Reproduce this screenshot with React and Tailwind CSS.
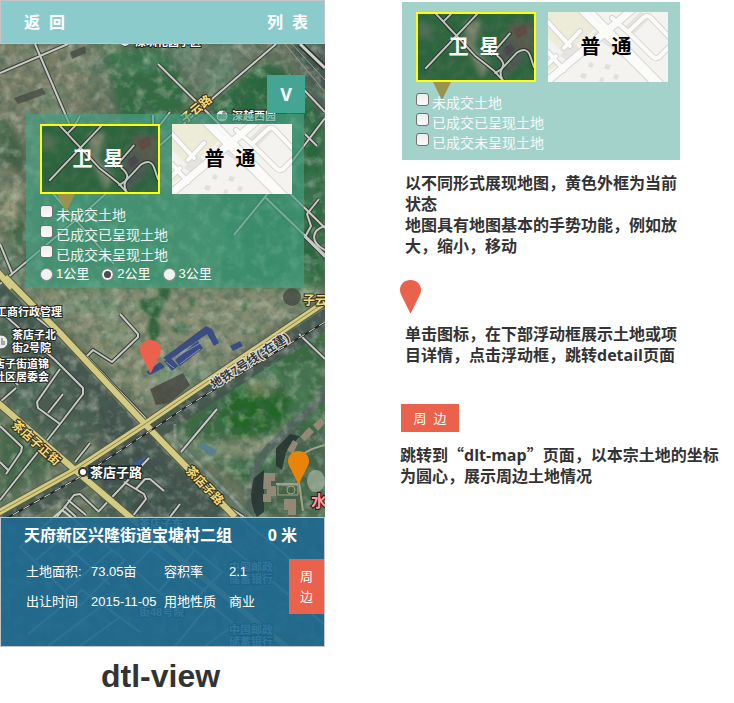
import React, { useId, useState } from "react";

const SANS = "font-['Liberation_Sans','Noto_Sans_CJK_SC',sans-serif]";
const HEAD = "font-['Open_Sans','Noto_Sans_CJK_SC',sans-serif]";

const mapRoads = [
  "M0 73 L68 44",
  "M35 44 L72 130 L116 182 L170 112",
  "M72 130 L80 116",
  "M153 115 V130",
  "M158 64 L325 228",
  "M276 44 L205 105 L90 208 L0 284",
  "M290 75 L325 112",
  "M325 118 L265 197 L234 235",
  "M265 197 L325 255",
  "M305 134 L317 146",
  "M319 199 L307 214 L311 226 L305 237 L325 257",
  "M325 226 C312 230 309 242 325 250",
  "M0 244 L12 273",
  "M50 190 L114 264",
  "M37 318 L88 358 L145 419",
  "M86 357 L93 350 L112 362 L138 337 L138 334 L120 314",
  "M0 311 L55 360 L83 388 L83 394 L60 424 L0 500",
  "M60 424 L38 408 L37 402 L60 369 M48 413 L63 394",
  "M0 402 L16 388 M10 376 L18 385",
  "M0 426 L22 447 L21 452 L6 474 M0 462 L9 471",
  "M57 517 L74 495 L80 494 L98 511 M64 506 L76 517 M68 500 L86 515",
  "M98 512 L149 458 M124 482 L144 494 L146 499 L132 517 M136 489 L145 479 L150 479 L164 491",
  "M217 409 L181 452",
  "M170 517 L180 504 M75 462 L90 443",
  "M120 392 L146 419",
  "M299 334 L325 359",
  "M230 508 L244 517",
];

const yellowRoads = [
  "M-4 270 L12 288",
  "M5 277 L60 333 L145 424 L235 517",
  "M328 300 L180 400 L145 424 L75 470 L-4 514",
  "M-4 401 L75 470 L130 517 L290 650",
];

const sheetRoads = [
  "M20 547 L62 510 L125 560 L80 606 Z",
  "M36 560 L78 524 M50 575 L96 537 M66 590 L112 550 M50 530 L110 585",
  "M28 634 L82 590 L140 632 M48 646 L104 604 M80 646 L120 617",
  "M170 530 L222 572 L182 612 L132 568 Z M150 549 L206 592 M195 550 L160 590",
  "M210 530 L325 625 M240 517 L325 588",
  "M175 646 L210 604 L260 646 M205 646 L235 624",
];

function MapBackdrop() {
  return (
    <svg
      aria-hidden="true"
      viewBox="0 0 325 647"
      preserveAspectRatio="xMidYMid slice"
      className="absolute inset-0 -z-10 h-full w-full"
    >
      <defs>
        <filter id="soft" x="-20%" y="-20%" width="140%" height="140%">
          <feGaussianBlur stdDeviation="4" />
        </filter>
        <filter id="slight" x="-20%" y="-20%" width="140%" height="140%">
          <feGaussianBlur stdDeviation="1.5" />
        </filter>
        <filter id="grain" x="0" y="0" width="100%" height="100%">
          <feTurbulence type="fractalNoise" baseFrequency="0.12" numOctaves="5" seed="7" />
          <feColorMatrix values="0 0 0 0 0.06  0 0 0 0 0.13  0 0 0 0 0.09  1.8 0 0 0 -0.7" />
        </filter>
        <filter id="grainLight" x="0" y="0" width="100%" height="100%">
          <feTurbulence type="fractalNoise" baseFrequency="0.09" numOctaves="5" seed="21" />
          <feColorMatrix values="0 0 0 0 0.7  0 0 0 0 0.73  0 0 0 0 0.62  0 1.8 0 0 -0.85" />
        </filter>
        <filter id="woods" x="0" y="0" width="100%" height="100%">
          <feTurbulence type="fractalNoise" baseFrequency="0.025" numOctaves="4" seed="4" />
          <feColorMatrix values="0 0 0 0 0.14  0 0 0 0 0.35  0 0 0 0 0.2  0 0 4 0 -2.1" />
        </filter>
      </defs>
      <rect width="325" height="647" fill="#6a755f" />
      <g filter="url(#soft)">
        <path d="M0 40 H100 L80 120 L110 200 L60 290 L0 240Z" fill="#7b7f68" />
        <path d="M0 110 L26 150 V180 L0 160Z M0 225 L30 200 V270Z" fill="#3f6143" />
        <path d="M0 190 L18 192 L22 218 L0 226Z" fill="#979978" />
        <path d="M104 50 L165 44 L190 90 L180 130 L120 120Z" fill="#336c43" />
        <path d="M160 44 H262 L205 96Z" fill="#6b7d6a" />
        <path d="M210 105 L262 62 L290 70 L325 120 V290 H200Z" fill="#28673b" />
        <path d="M30 190 H220 V290 H40Z" fill="#42744e" />
        <path d="M290 40 H325 V130Z" fill="#4a5852" />
        <path d="M25 288 H325 L190 385 L150 410 L60 320Z" fill="#868d72" />
        <path d="M0 290 L120 410 L70 460 L0 400Z" fill="#4a5c50" />
        <path d="M0 420 L60 460 L0 500Z" fill="#44694a" />
        <path d="M230 375 L325 325 V460 L265 500 L175 430Z" fill="#3a6a42" />
        <path d="M236 385 L300 398 L275 430 L240 440 L218 420Z" fill="#226628" />
        <path d="M190 445 L275 438 L290 420 L285 450 L220 458Z" fill="#8a9377" />
        <path d="M246 378 L275 378 L272 392 L252 394Z" fill="#7f8d66" />
        <path d="M100 400 L150 450 L240 517 H100Z" fill="#3f504b" />
        <path d="M285 430 H325 V517 H250Z" fill="#44634a" />
      </g>
      <g fill="#2d6336" filter="url(#slight)">
        <path d="M140 300 L158 298 L160 288 L172 288 L164 306 L158 316 L160 334 L152 344 L148 330 L150 316 L141 308Z" />
        <path d="M170 328 L182 322 L190 328 L180 334Z M188 298 L196 300 L192 308Z M254 326 L262 328 L256 334Z M240 306 L250 300 L244 312Z" />
      </g>
      <rect width="325" height="647" filter="url(#woods)" opacity="0.4" />
      <g fill="none" stroke="#44534e" strokeWidth="18" opacity="0.85">
        <path d="M-10 284 L45 338 L130 429 L220 522" />
        <path d="M330 316 L186 410 L151 434 L80 480 L0 526" />
        <path d="M298 44 L330 84" />
      </g>
      <g fill="none" stroke="#55655f" strokeWidth="8">
        <path d="M328 392 L275 442 C258 458 250 472 250 520" />
        <path d="M175 424 V440 L256 522" strokeWidth="3" stroke="#88958a" />
      </g>
      <rect width="325" height="647" filter="url(#grain)" opacity="0.8" />
      <rect width="325" height="647" filter="url(#grainLight)" opacity="0.55" />

      <g fill="#394c84">
        <path d="M163 358 L206 326 L212 329 L219 343 L214 346 L207 334 L168 361Z" />
        <path d="M175 360 L198 341 L203 348 L180 366Z M164 361 L171 358 L178 366 L172 371Z M146 372 L160 362 L165 367 L150 375Z" />
        <path d="M230 346 L240 341 L243 346 L233 351Z" />
      </g>
      <path d="M176 357 L202 342 M180 364 L200 349 M166 362 L174 368" stroke="#8995b4" strokeWidth="1" />
      <path d="M198 447 l5 -5 l14 9 l-5 5Z" fill="#55808c" />
      <path d="M134 463 l12 -7 l3 4 l-12 7z" fill="#3f5b95" />
      <path d="M150 389 L183 373 L190 385 L170 403 L156 405Z" fill="#45443e" opacity="0.8" />
      <path d="M70 52 L85 46 L86 53 L72 59Z M14 98 L42 88 L46 94 L18 104Z" fill="#3d443e" opacity="0.7" />
      <circle cx="292" cy="297" r="9" fill="#454a43" opacity="0.8" />
      <g fill="#26322f" opacity="0.85">
        <path d="M254 478 L264 470 V512 L257 517 Q247 500 254 478Z" />
        <path d="M276 448 L290 434 L300 436 L286 452 L282 470 L276 466Z" />
      </g>
      <g fill="#9a8c7a" opacity="0.9">
        <path d="M264 473 h11 v8 h-4 v5 h5 v10 h-5 v6 h-8 v-8 h4 v-5 h-4z" />
        <path d="M287 450 l6 -10 l5 3 l-5 11z M300 437 l9 -10 l5 5 l-9 9z M313 425 l8 -7 l4 5 l-7 8z" />
        <path d="M284 499 h12 v16 h-8 v-5 h-4z" />
      </g>
      <g fill="none" stroke="#a0a486" strokeWidth="2">
        <path d="M299 482 L303 511 M276 484 H298 M303 454 Q312 448 325 445" />
        <circle cx="291" cy="490" r="4" strokeWidth="1" />
        <path d="M278 485 H298 V495 H278Z" strokeWidth="1" />
      </g>
      <ellipse cx="316" cy="481" rx="9" ry="11" fill="#a0b09b" opacity="0.75" />

      <g fill="none" strokeLinejoin="round">
        {mapRoads.map((d) => (
          <path key={d} d={d} stroke="#363e38" strokeWidth="4" />
        ))}
        {mapRoads.map((d) => (
          <path key={d} d={d} stroke="#c9cac3" strokeWidth="2" />
        ))}
        <path d="M300 44 L325 68" stroke="#2b322e" strokeWidth="6" />
        <path d="M300 44 L325 68" stroke="#d3d3cd" strokeWidth="3" />
        <path d="M285 44 L325 92 M292 44 L325 80" stroke="#8f9d85" strokeWidth="1" />
        {yellowRoads.map((d) => (
          <path key={d} d={d} stroke="#5b5c3c" strokeWidth="8" />
        ))}
        {yellowRoads.map((d) => (
          <path key={d} d={d} stroke="#d3cb84" strokeWidth="6" />
        ))}
        <path d="M328 300 L180 400 L145 424 L75 470 L-4 514" stroke="#928844" strokeWidth="1" />
        <path d="M325 322 L186 407 L150 431 L80 477 L0 522" stroke="#222" strokeWidth="2" />
        <path d="M325 322 L186 407 L150 431 L80 477 L0 522" stroke="#ddd" strokeWidth="1" strokeDasharray="7 5" />
      </g>

      <g fill="none" stroke="#c9d0c8" strokeWidth="2">
        {sheetRoads.map((d) => (
          <path key={d} d={d} />
        ))}
      </g>

      <g
        fontFamily="'Liberation Sans', 'Noto Sans CJK SC', sans-serif"
        fontSize="11"
        fontWeight="700"
        fill="#fff"
        stroke="#1e2523"
        strokeWidth="2"
        paintOrder="stroke"
      >
        <text x="135" y="46">深圳花园小区</text>
        <circle cx="125" cy="41" r="5" fill="#e5e7e4" strokeWidth="1" />
        <text x="232" y="120">深越西园</text>
        <text x="-4" y="316">工商行政管理</text>
        <text x="12" y="339">茶店子北</text>
        <text x="12" y="352">街2号院</text>
        <text x="-6" y="368">店子街道锦</text>
        <text x="-6" y="381">社区居委会</text>
        <text x="229" y="571">中国邮政</text>
        <text x="229" y="583">储蓄银行</text>
        <text x="229" y="634">中国邮政</text>
        <text x="229" y="646">储蓄银行</text>
        <text x="139" y="528">茶店子东</text>
        <text x="139" y="616">街48号院</text>
        <text x="214" y="389" fontSize="12" transform="rotate(-33 214 389)" fill="#34383a" stroke="#e0e1df">地铁7号线(-在建)</text>
        <g fill="#f3d97c" stroke="#37301b" fontSize="12">
          <text x="11" y="426" transform="rotate(42 11 426)">茶店子正街</text>
          <text x="185" y="471" transform="rotate(46 185 471)">茶店子路</text>
          <text x="185" y="124" transform="rotate(-40 185 124)">子云路</text>
          <text x="303" y="305">子云路</text>
        </g>
        <rect x="88" y="465" width="54" height="14" fill="#283c4a" stroke="none" />
        <text x="90" y="477" fontSize="13">茶店子路</text>
        <text x="311" y="507" fontSize="16" fill="#fa9a9e" stroke="#3b1218">水</text>
      </g>
      <g fill="#e9eceb" stroke="#49504d">
        <circle cx="222" cy="116" r="6" />
        <circle cx="1" cy="342" r="7" />
        <path d="M219 119 V115 H221 V119 M223 119 V112 H225 V119 M-1 345 V340 M2 345 V338 M4 345 V341" fill="none" stroke="#59605c" />
        <circle cx="83" cy="472" r="4" fill="#fff" stroke="#34383a" strokeWidth="2" />
      </g>
    </svg>
  );
}

function SatelliteThumb() {
  const id = useId();
  const roads = [
    "M18 0 L59 44 L78 59 L90 72",
    "M8 57 L62 0",
    "M27 8 L35 0",
    "M95 21 L76 43 M82 44 Q92 52 86 58 L80 62",
    "M88 70 Q82 60 90 54 L102 41 Q112 34 116 44 L120 56",
  ];
  return (
    <svg aria-hidden="true" viewBox="0 0 120 70" className="absolute inset-0 h-full w-full" preserveAspectRatio="xMidYMid slice">
      <defs>
        <filter id={id + "g"} x="0" y="0" width="100%" height="100%">
          <feTurbulence type="fractalNoise" baseFrequency="0.1" numOctaves="4" seed="9" />
          <feColorMatrix values="0 0 0 0 0.08  0 0 0 0 0.16  0 0 0 0 0.1  1.8 0 0 0 -0.7" />
        </filter>
        <filter id={id + "b"}>
          <feGaussianBlur stdDeviation="3" />
        </filter>
      </defs>
      <rect width="120" height="70" fill="#2c653d" />
      <g filter={`url(#${id}b)`}>
        <path d="M48 8 L66 8 L58 34 L74 54 L66 68 L50 34Z" fill="#7e8670" />
        <path d="M95 10 H120 V40 L100 44 L88 30Z" fill="#575a4d" />
        <path d="M78 34 L98 28 L110 50 L90 66Z" fill="#4b5652" />
        <path d="M0 8 L16 14 L12 26 L0 24Z" fill="#507052" />
      </g>
      <path d="M98 16 L110 12 L114 20 L103 26Z" fill="#65413b" opacity="0.7" />
      <path d="M88 36 L96 32 L100 38 L92 44Z" fill="#4c444b" opacity="0.8" />
      <rect width="120" height="70" filter={`url(#${id}g)`} opacity="0.65" />
      <g fill="none" strokeLinejoin="round" strokeLinecap="round">
        {roads.map((d) => (
          <path key={d} d={d} stroke="#28332c" strokeWidth="4" />
        ))}
        {roads.map((d) => (
          <path key={d} d={d} stroke="#c3c8bf" strokeWidth="2" />
        ))}
      </g>
    </svg>
  );
}

function StreetThumb() {
  const wide = ["M34 -2 L110 74", "M86 -4 L-4 72"];
  const narrow = [
    "M-2 8 L22 34 M16 36 L32 19 M8 44 L-2 54 M0 40 L16 58",
    "M42 -2 L114 72",
    "M64 6 L80 20 L104 44 Q109 49 114 42 L124 32",
    "M80 20 L96 5 Q100 2 104 7 L122 26",
  ];
  return (
    <svg aria-hidden="true" viewBox="0 0 120 70" className="absolute inset-0 h-full w-full" preserveAspectRatio="xMidYMid slice">
      <rect width="120" height="70" fill="#f4f3f0" />
      <path d="M0 0 H30 L48 16 L30 32 L18 44 L0 26Z M0 46 L10 52 L0 60Z" fill="#edecd9" />
      <path d="M92 0 L76 16 L84 24 L104 4Z M44 22 L54 16 L114 70 H106Z M12 44 L24 30 L34 38 L22 50Z" fill="#e5e4e0" />
      <g fill="none" strokeLinejoin="round" strokeLinecap="round">
        {wide.map((d) => (
          <path key={d} d={d} stroke="#d6d5d2" strokeWidth="9" />
        ))}
        {narrow.map((d) => (
          <path key={d} d={d} stroke="#d6d5d2" strokeWidth="6" />
        ))}
        {wide.map((d) => (
          <path key={d} d={d} stroke="#fbfbfa" strokeWidth="7" />
        ))}
        {narrow.map((d) => (
          <path key={d} d={d} stroke="#fbfbfa" strokeWidth="4" />
        ))}
      </g>
      <path d="M42 50 l4 2 l-2 4 l-4 -2z M58 52 l5 1 l-2 5 l-5 -2z M34 61 l5 1 l-2 5 l-5 -2z M67 62 l4 1 l-2 5 l-4 -2z M53 65 l3 1 l-1 4 l-4 -1z" fill="#e0dfdd" />
    </svg>
  );
}

function Pin({ className = "" }) {
  return (
    <svg aria-hidden="true" viewBox="0 0 21 33" className={"h-[33px] w-[21px] " + className}>
      <path
        d="M10.500 0 C16.500 0 21 4 21 10 C21 12 20.500 13.500 19.500 15.500 L10.800 33 H10.200 L1.500 15.500 C0.500 13.500 0 12 0 10 C0 4 4.500 0 10.500 0Z"
        fill="currentColor"
      />
    </svg>
  );
}

function LayerPanel({ name, className = "", children }) {
  const items = ["未成交土地", "已成交已呈现土地", "已成交未呈现土地"];
  return (
    <section className={"w-[278px] pt-[10px] pr-3 pl-[14px] " + className}>
      <div className="flex gap-3 text-xl font-bold">
        <button
          type="button"
          className="relative flex h-[70px] w-[120px] items-center justify-center border-2 border-[#ffff00] pr-1 text-white"
        >
          <SatelliteThumb />
          <span className="relative">卫&nbsp;&nbsp;星</span>
          <svg aria-hidden="true" viewBox="0 0 18 18" className="absolute top-full left-[15px] mt-[2px] h-[18px] w-[18px]">
            <path d="M0 0 H18 L9 18Z" fill="#9b924d" />
          </svg>
        </button>
        <button type="button" className="relative flex h-[70px] w-[120px] items-center justify-center pr-1 text-black">
          <StreetThumb />
          <span className="relative">普&nbsp;&nbsp;通</span>
        </button>
      </div>
      <div className="relative mt-[11px] text-sm text-white/90">
        {items.map((text, i) => (
          <div key={text} className="flex h-5 items-start gap-[3px]">
            <input
              type="checkbox"
              id={name + i}
              className="h-[13px] w-[13px] appearance-none rounded-[3px] border border-[#707070] bg-gradient-to-b from-[#ededed] to-[#fafafa] checked:bg-[#555] checked:bg-none"
            />
            <label htmlFor={name + i} className="leading-5">
              {text}
            </label>
          </div>
        ))}
      </div>
      {children}
    </section>
  );
}

function RadiusPicker() {
  const [radius, setRadius] = useState("2");
  return (
    <div className="flex h-[18px] items-center gap-3 text-[13px] text-white">
      {["1", "2", "3"].map((km) => (
        <div key={km} className="flex items-center gap-[3px]">
          <input
            type="radio"
            name="radius"
            id={"radius" + km}
            checked={radius === km}
            onChange={() => setRadius(km)}
            className="h-[13px] w-[13px] appearance-none rounded-full border border-[#8a8a8a] bg-[#f2f2f2] checked:bg-[#4c4c4c] checked:shadow-[inset_0_0_0_2px_#f0f0f0]"
          />
          <label htmlFor={"radius" + km} className="leading-[18px]">
            {km}公里
          </label>
        </div>
      ))}
    </div>
  );
}

function Phone() {
  return (
    <div className="relative isolate overflow-hidden">
      <MapBackdrop />
      <header className={"flex h-11 items-center justify-between border border-[#c4c6c6] bg-[#8ccbcb] pr-4 pl-[23px] pt-[2px] text-base font-bold text-white " + SANS}>
        <button type="button">返&nbsp;&nbsp;回</button>
        <button type="button">列&nbsp;&nbsp;表</button>
      </header>

      <main className="relative h-[473px] pt-[31px]">
        <button type="button" className={"mr-5 ml-auto block h-[38px] w-[38px] bg-[#45a595] text-lg font-bold text-white " + HEAD}>
          V
        </button>
        <LayerPanel name="layer" className="mt-px ml-[26px] bg-[#45a184]/65 pb-[5px]">
          <RadiusPicker />
        </LayerPanel>
        <Pin className="absolute top-[296px] left-[140px] text-[#eb624c]" />
        <Pin className="absolute top-[407px] left-[288px] text-[#ea830a]" />
      </main>

      <section className="h-[130px] border border-[#c4c6c6] bg-[#1c6890]/90 text-white">
        <h2 className={"flex justify-between pt-[5px] pr-[27px] pl-[23px] text-base font-bold " + HEAD}>
          <span>天府新区兴隆街道宝塘村二组</span>
          <span>0 米</span>
        </h2>
        <div className="flex items-start justify-between pt-3">
          <dl className="grid grid-cols-[65px_73px_65px_1fr] gap-y-[10px] pt-[3px] pl-[25px] text-[13px] leading-5 whitespace-nowrap">
            <dt>土地面积:</dt>
            <dd>73.05亩</dd>
            <dt>容积率</dt>
            <dd>2.1</dd>
            <dt>出让时间</dt>
            <dd>2015-11-05</dd>
            <dt>用地性质</dt>
            <dd>商业</dd>
          </dl>
          <button type="button" className="flex h-[55px] w-[35px] flex-col items-center justify-center bg-[#eb624c] text-[13px] leading-5">
            <span>周</span>
            <span>边</span>
          </button>
        </div>
      </section>
    </div>
  );
}

export default function App() {
  return (
    <div className={"flex min-h-screen gap-[75px] bg-white " + SANS}>
      <div className="w-[325px] shrink-0">
        <Phone />
        <h1 className="pt-[9px] pr-1 text-center text-[32px] leading-10 font-bold text-[#333]">dtl-view</h1>
      </div>

      <aside className={"min-w-0 flex-1 pt-[2px] text-base leading-[21px] font-bold text-[#333] " + HEAD}>
        <div className={"ml-[2px] font-normal " + SANS}>
          <LayerPanel name="legend" className="bg-[#a3d2ca] pb-[7px]" />
        </div>
        <div className="max-w-[280px] pt-[13px] pl-[5px]">
          <p>以不同形式展现地图，黄色外框为当前状态</p>
          <p>地图具有地图基本的手势功能，例如放大，缩小，移动</p>
        </div>
        <Pin className="mt-[23px] text-[#eb624c]" />
        <p className="max-w-[280px] pt-[11px] pl-[5px]">
          单击图标，在下部浮动框展示土地或项目详情，点击浮动框，跳转detail页面
        </p>
        <button type="button" className={"mt-[38px] ml-px block h-7 w-[58px] bg-[#eb624c] text-[13px] font-normal text-white " + SANS}>
          周&nbsp;&nbsp;边
        </button>
        <p className="pt-3">
          跳转到<span className="font-['Noto_Sans_CJK_SC',sans-serif]">“</span>dlt-map
          <span className="font-['Noto_Sans_CJK_SC',sans-serif]">”</span>页面，以本宗土地的坐标为圆心，展示周边土地情况
        </p>
      </aside>
    </div>
  );
}
